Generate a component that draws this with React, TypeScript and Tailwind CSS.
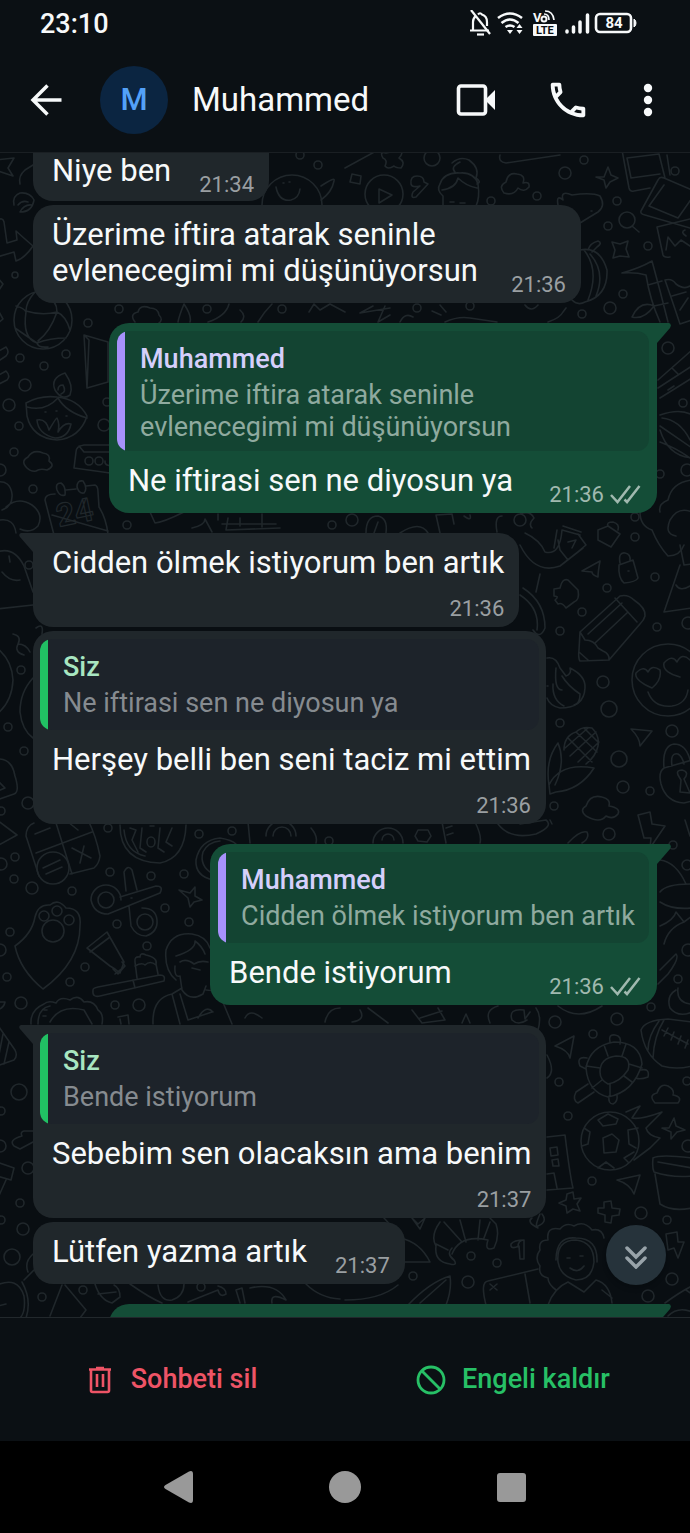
import type { ReactNode } from 'react';
import { MdOutlineCall } from 'react-icons/md';

interface Quote {
  author: string;
  text: string;
}

interface Message {
  text: string;
  time: string;
  mine?: boolean;
  tail?: boolean;
  // time sits on its own line under the text
  stacked?: boolean;
  // first row, its top is scrolled under the header
  scrolled?: boolean;
  quote?: Quote;
}

const messages: Message[] = [
  { text: 'Niye ben', time: '21:34', scrolled: true },
  { text: 'Üzerime iftira atarak seninle evlenecegimi mi düşünüyorsun', time: '21:36' },
  {
    text: 'Ne iftirasi sen ne diyosun ya',
    time: '21:36',
    mine: true,
    tail: true,
    quote: {
      author: 'Muhammed',
      text: 'Üzerime iftira atarak seninle evlenecegimi mi düşünüyorsun'
    }
  },
  { text: 'Cidden ölmek istiyorum ben artık', time: '21:36', tail: true, stacked: true },
  {
    text: 'Herşey belli ben seni taciz mi ettim',
    time: '21:36',
    stacked: true,
    quote: { author: 'Siz', text: 'Ne iftirasi sen ne diyosun ya' }
  },
  {
    text: 'Bende istiyorum',
    time: '21:36',
    mine: true,
    tail: true,
    quote: { author: 'Muhammed', text: 'Cidden ölmek istiyorum ben artık' }
  },
  {
    text: 'Sebebim sen olacaksın ama benim',
    time: '21:37',
    tail: true,
    stacked: true,
    quote: { author: 'Siz', text: 'Bende istiyorum' }
  },
  { text: 'Lütfen yazma artık', time: '21:37' }
];

// [cx, cy, r]
const dots: [number, number, number][] = [
  [15, 275, 3], [88, 323, 4], [119, 309, 4], [207, 309, 4], [282, 309, 4], [20, 358, 4], [66, 354, 4],
  [44, 366, 4], [25, 385, 6], [9, 405, 6], [19, 426, 4], [14, 452, 4], [33, 489, 4], [104, 425, 6],
  [107, 402, 4], [0, 470, 6], [127, 525, 4], [332, 525, 4], [300, 155, 4], [318, 165, 4],
  [432, 158, 8], [491, 201, 4], [537, 196, 4], [565, 173, 6], [584, 160, 4], [617, 201, 4],
  [608, 226, 4], [648, 246, 4], [675, 171, 4], [623, 294, 4], [610, 308, 6], [582, 314, 4],
  [417, 308, 4], [470, 306, 4], [668, 348, 6], [683, 403, 4], [660, 474, 4], [635, 537, 4],
  [687, 470, 6], [352, 520, 6], [635, 517, 4], [655, 577, 4], [607, 588, 4], [582, 612, 4],
  [560, 631, 4], [657, 627, 4], [688, 623, 6], [603, 682, 6], [609, 709, 8], [560, 723, 4],
  [672, 731, 6], [619, 759, 8], [623, 787, 6], [650, 791, 4], [554, 806, 4], [609, 834, 6],
  [29, 565, 4], [21, 670, 4], [8, 727, 4], [24, 751, 4], [28, 803, 6], [1, 811, 4],
  [15, 857, 4], [1, 864, 6], [14, 879, 4], [32, 888, 6], [72, 891, 4], [108, 828, 4],
  [110, 872, 4], [151, 876, 4], [184, 874, 4], [165, 908, 4], [189, 922, 4], [117, 924, 4],
  [199, 834, 4], [232, 831, 4], [329, 841, 4], [147, 946, 4], [85, 967, 4], [70, 982, 4],
  [21, 1003, 6], [7, 977, 4], [10, 932, 4], [0, 950, 6], [115, 1005, 4], [139, 1005, 6],
  [19, 1092, 8], [1, 1111, 4], [0, 1146, 6], [28, 1168, 6], [20, 1203, 4], [1, 1220, 4],
  [23, 1229, 6], [12, 1257, 8], [42, 1297, 4], [83, 1290, 4], [201, 1287, 4],
  [673, 845, 4], [687, 865, 5], [688, 950, 6], [678, 979, 4], [651, 1007, 4], [617, 1019, 6],
  [555, 1022, 6], [593, 1034, 4], [559, 1082, 4], [568, 1116, 4], [687, 1081, 4], [688, 1146, 6],
  [592, 1181, 4], [641, 1213, 6], [667, 1220, 4], [471, 1256, 4], [497, 1263, 4], [413, 1276, 4],
  [468, 1282, 6], [672, 1279, 6], [648, 1296, 6]
];

const doodles = [
  // planet, rocket and arrow
  'M-5 160 14 158 8 168 13 176-2 171', 'M20 184Q18 176 25 170L33 165', 'M14 205Q12 196 20 193Q30 192 34 200Q32 212 20 212Q24 204 32 205M18 205Q22 200 28 202',
  'M-3 220Q3 217 4 222L7 243 17 240 16 231Q26 240 33 246Q25 258 16 261L14 252-3 257', 'M-2 278 3 284-1 290M-2 310 3 319-3 324',
  'M-3 352 6 347Q10 352 6 356L-3 362M-3 376 6 371Q11 376 7 380L-3 385',
  'M262 205A30 30 0 1 1 322 205M321 186Q336 176 334 181Q332 192 321 200M276 187Q279 202 291 200Q299 198 300 189M283 183h1M289 182h1',
  // globe
  'M14 320a29 29 0 1 0 58 0a29 29 0 1 0-58 0M26 311Q42 316 57 312M16 306Q24 308 26 312Q22 338 37 343Q50 338 66 338M57 312Q50 332 38 341M35 292Q26 302 26 311M44 292Q57 300 57 312M57 312Q66 316 70 330M15 328Q28 337 37 343Q38 348 48 347',
  // clouds
  'M135 322Q129 314 138 312Q140 304 150 308Q158 308 159 315Q164 320 158 324', 'M27 468Q20 461 28 457Q33 449 43 453Q51 454 49 461Q56 466 47 470Q40 468 36 471Q31 472 27 468Z',
  'M504 193Q498 186 506 182Q508 172 517 174Q526 175 523 183Q530 181 529 187Q524 193 518 188Q514 196 504 193Z',
  'M586 816Q579 810 586 806Q590 794 602 797Q611 799 609 806Q621 808 618 814Q613 820 606 816Q600 824 586 816Z',
  'M655 1103Q648 1095 657 1093Q660 1083 668 1086Q675 1090 673 1095Q683 1097 678 1103Z',
  // candle, kite, tools between bubbles
  'M178 322Q179 316 184 304Q192 316 190 322M208 322Q226 316 229 304M240 310Q247 316 241 322M258 322Q264 312 272 304M309 312 314 304 320 310 330 304 345 312',
  'M84 335 108 342V382L87 388ZM84 335 89 340 87 388', 'M360 313 373 306M360 313 390 308M385 306 378 322 390 315',
  'M400 322Q405 312 413 317M432 311 441 315M440 305 446 312M445 322Q458 316 470 318L497 322M525 305Q531 313 538 305M548 322Q560 318 563 312L566 308',
  // diya lamp
  'M26 403Q40 395 57 397Q78 399 87 416Q80 438 57 440Q32 438 27 416Z', 'M27 407Q45 412 58 398Q66 412 87 418M55 390Q50 378 65 373Q74 386 70 395Q62 401 55 390ZM58 390Q58 385 63 385Q67 392 61 394',
  'M37 420Q46 418 49 430Q56 418 57 418Q60 424 58 432Q64 422 71 424Q68 438 55 438Q38 434 37 420ZM45 412h1M56 411h1M66 416h1',
  // music box and calendar
  'M110 445 84 445Q76 446 76 452L74 468 110 473M79 446 84 452H110', 'M85 461a4 4 0 1 0 8 0a4 4 0 1 0-8 0M95 461a4 4 0 1 0 8 0a4 4 0 1 0-8 0M105 461a4 4 0 1 0 6-3',
  'M54 535 45 500Q45 494 55 494M66 490 76 489M86 486 95 485Q98 486 98 492L99 507M52 515 108 531M99 507Q106 518 108 534M57 490Q55 483 61 483Q66 486 65 495Q60 497 57 490ZM77 487Q77 480 83 481Q88 488 84 493Q79 494 77 487Z',
  'M-3 482Q10 480 12 494Q13 506 2 510M6 507Q18 496 32 505Q44 514 38 526Q30 534 20 529M0 520Q14 518 16 533M150 512 155 523Q164 522 184 512M192 528Q205 525 205 519L212 532M218 520V514M228 518 226 530 280 528M240 518V526M262 514V527M222 524H276',
  // play, key, woman
  'M365 194a19 19 0 1 0 38 0a19 19 0 1 0-38 0M379 189V203L392 195Z', 'M383 158Q379 151 386 153L400 150Q404 153 399 158Q406 162 401 168Q396 168 394 166Q388 170 385 166Q388 160 383 158Z', 'M352 174 361 176 360 184 350 182Z',
  'M411 184Q410 176 417 176Q424 176 424 182L428 184 416 197Q410 199 413 192L420 186Q412 188 411 184Z',
  'M443 206V196Q436 190 440 184Q444 172 460 173Q474 172 478 184Q480 198 476 206M442 190Q456 188 458 178Q466 186 477 188M452 163Q460 156 469 160Q480 168 476 178Q482 182 477 184M455 172Q450 167 460 162M450 202h4M460 203h5',
  'M345 168 378 150M500 155Q498 162 506 163L560 155',
  // photos, whale, magnifier, landscape
  'M622 150 629 188Q630 192 634 191L650 188M627 158 659 154 665 178M627 158 631 178 660 174M667 155 670 175M658 180Q660 176 664 178L692 190M658 180 641 211Q640 214 645 215L690 228M664 185 649 206 678 218 692 198',
  'M558 205Q556 194 563 200Q560 190 572 195Q592 192 600 196Q606 206 598 212Q588 218 580 223M591 211h1', 'M619 220a8 8 0 1 0 16 0a8 8 0 1 0-16 0M632 226 639 232', 'M604 177 608 167 611 175 618 178 610 182 606 188 604 180 596 177ZM612 242 620 244 628 241 626 249 629 257 620 256 613 258 615 250Z',
  'M657 227 663 255Q664 258 670 257M657 227 690 219M666 250 668 237 675 246 681 240 690 246M685 230Q680 232 686 236',
  // pumpkin and bamboo
  'M580 250Q600 246 607 270Q608 296 585 302Q578 306 572 300M584 250Q600 270 588 300M590 254Q606 272 596 296M588 250Q590 243 598 241Q603 243 597 247L592 252',
  'M622 273Q640 268 652 261Q660 290 668 322M646 275Q636 272 622 273M648 285 662 281M654 306 668 303M646 275Q650 300 660 322M665 280Q672 278 676 284Q684 290 690 286M665 280Q672 300 680 324L692 320M632 317Q640 300 654 306Q644 320 632 317M672 296 686 292M688 298 680 310',
  // shuttlecock and volleyball
  'M658 380 692 350M658 388 692 366M660 398 692 378M672 368 678 374M668 390 674 386', 'M660 415Q680 408 692 415M660 430Q668 456 692 458M660 442Q676 448 690 458M662 418Q680 420 690 440M660 426 692 448',
  'M692 480Q672 482 668 500Q658 504 660 512M640 512Q640 526 652 530Q658 545 668 556Q680 556 684 545M692 512Q678 506 670 520Q664 534 676 536',
  'M366 533Q366 516 378 516Q388 518 386 533M378 522 374 533M400 533Q420 520 428 533M436 515 452 514 454 524M436 515 440 533M464 516Q472 522 470 515',
  // lock, arm, puzzle and pencil
  'M497 532Q494 516 502 516M514 520a6 6 0 1 0 12 0a6 6 0 1 0-12 0M520 514Q530 510 534 518Q528 524 532 528M525 533Q540 540 545 552Q560 556 562 530M520 545Q535 575 560 566L583 548M562 530 580 535M557 530 554 548M563 526 581 532M578 534 586 545 568 560 560 550 558 540M568 542 576 540 572 548',
  'M598 530 608 526 620 534 611 547 598 540ZM608 526Q606 522 613 522Q620 524 618 530', 'M619 565 633 560 638 578Q636 582 624 583Q618 578 619 565ZM620 563Q618 552 625 553Q631 554 630 561M628 571h1',
  'M582 571 600 561Q598 572 598 577Q592 575 592 572Z', 'M554 589 560 588Q562 578 568 580L578 590Q580 600 574 602L566 608Q562 602 558 604L555 600Q560 596 554 596Z',
  'M580 632 620 596Q628 594 634 600Q646 608 645 616Q644 620 640 624L609 660 580 661Q578 658 579 650ZM580 632 585 640Q594 640 598 648L603 651Q610 654 609 660M595 643 628 612M588 634 622 603M615 598 637 622M579 652 588 660',
  'M523 588Q545 602 545 628Q540 640 533 630M520 595Q540 608 537 630M540 574 536 592M680 545 684 565 692 564M680 565 664 612 692 608M676 585Q680 592 690 586',
  // flame, smiley, corn, cursor, padlock
  'M547 658Q556 656 560 668L566 676Q572 674 570 668Q586 676 585 688Q584 708 560 708Q550 706 547 698M556 668Q554 690 562 690M562 676Q568 686 580 694Q580 704 574 705M553 684Q552 700 564 706M547 686h1',
  'M632 680a36 36 0 1 0 72 0a36 36 0 1 0-72 0', 'M652 688Q634 680 636 673Q644 665 648 672Q652 664 660 670Q662 680 652 688ZM680 677Q662 672 664 663Q672 654 677 662Q682 652 690 660M648 692Q654 708 672 706Q686 704 688 690',
  'M549 785Q545 760 558 743Q566 762 555 785M549 785Q560 762 594 768Q580 790 556 792L550 794ZM564 750Q564 736 576 732Q582 726 592 728Q600 736 598 746Q596 756 586 764M568 738 592 762M576 732 597 752M584 728 598 742M565 748 588 728M570 756 596 732M578 762 599 742',
  'M631 729 652 731 640 746Q640 738 631 729Z', 'M664 768Q662 746 674 744Q686 744 690 760M672 766Q670 752 678 754Q682 756 684 764M692 760 664 768Q658 772 661 784Q666 802 684 803L692 801M678 775Q676 770 682 770Q690 772 684 779L690 793 680 792 681 780Z',
  // left edge
  'M-3 552Q14 546 24 566L33 592M-3 609 33 605M9 556 10 562M2 572Q10 582 20 580', 'M33 678Q20 692 20 712Q22 730 33 738M13 634Q22 636 18 644Q26 644 30 652M36 628Q44 622 42 634M18 644Q14 652 24 655',
  'M-3 648Q12 660 13 680Q12 702-3 714M-3 759Q12 758 15 776Q20 792 14 794L-3 800M-3 780 5 788-2 791',
  // calculator, watermelon, scissors
  'M-3 820 17 835-3 846', 'M26 836Q26 826 34 823M26 836 39 876M88 820Q96 836 100 856Q99 864 94 868L70 874M36 853 92 832M56 823 72 874M35 834 50 828M68 822 78 830M72 848 91 858M84 846 80 863',
  'M37 868a16 16 0 1 0 32 0a16 16 0 1 0-32 0M43 868 60 860M46 874 62 867', 'M120 825Q120 862 160 863Q185 858 186 825M124 830Q126 852 145 856M130 828 136 830 132 840 138 852M142 828 140 848 146 852M160 828 158 848 164 852M172 828 166 842 172 846M150 826h4M147 842a4 5 0 1 0 8 0a4 5 0 1 0-8 0',
  'M91 900a15 15 0 1 1 30 0M91 900Q94 914 108 914L160 893Q164 886 156 886L120 897M98 900a8 8 0 1 0 16 0a8 8 0 1 0-16 0M126 891 124 872Q128 864 132 870L137 890M129 906 131 926Q136 936 146 936Q158 932 157 920Q156 908 142 908M137 922a8 8 0 1 0 16 0a8 8 0 1 0-16 0M131 898h1',
  'M179 890 190 893 195 887 195 896 202 900 194 902 190 907 188 898Z',
  'M213 880Q195 876 196 860Q200 840 220 838Q232 840 236 844M213 874Q199 866 203 852Q208 842 220 841', 'M248 822 250 843M266 836a15 15 0 1 1 30 0M273 836a9 9 0 1 1 18 0M311 828Q318 836 316 843',
  // paw, tube, cake, woman
  'M15 946Q32 934 35 917Q38 904 50 905Q58 898 66 908Q82 908 80 926Q80 962 43 989Q20 970 15 946Z', 'M39 916a5 5 0 1 0 10 0a5 5 0 1 0-10 0M52 911a5 5 0 1 0 10 0a5 5 0 1 0-10 0M64 920a5 5 0 1 0 10 0a5 5 0 1 0-10 0M42 931a11 11 0 1 0 22 0a11 11 0 1 0-22 0',
  'M87 948 107 932 124 962 120 973 115 969 110 966ZM90 952 110 937M115 974 125 966M113 969 118 974 125 966 122 962',
  'M93 990Q93 988 98 987L160 975Q166 975 164 981L100 996Q92 998 93 990ZM133 980 135 988M137 978 135 962Q134 956 140 957Q140 952 146 955Q158 958 156 964L158 974M135 966Q142 962 145 965Q150 960 156 965',
  'M176 980Q164 970 166 950Q172 932 192 934Q206 936 210 948M176 956Q196 950 195 941Q202 946 205 954M175 966Q174 978 180 976L182 990Q190 1002 203 994L206 986M180 962Q186 958 194 964Q200 960 208 962M192 968 200 970M153 1024Q152 998 172 994L182 988M172 994 180 1024M180 994 188 1020 212 1012M206 990Q218 990 222 1000L232 1024M198 1018Q206 1004 213 1012',
  'M31 1024Q30 1010 44 1004Q48 1000 56 1003Q60 996 70 1000Q78 994 84 1002Q94 1000 98 1010Q104 1014 102 1024M38 1024Q38 1008 50 1006M50 1022Q60 1004 84 1010L92 1024M44 1010h3M43 1016h3M118 1017 128 1015 129 1024M120 1019 121 1024',
  'M-3 1002 5 1002Q4 1008-3 1010M-3 1024 15 1050Q18 1056 14 1060L-3 1066M3 1034-2 1060M9 1042 4 1064', 'M33 1131 24 1131Q20 1132 22 1136Q8 1140 14 1146L20 1149 33 1142M-3 1162 14 1168 11 1180-3 1176M6 1180-3 1200',
  // between the green and grey bubbles
  'M245 1018Q250 1008 262 1018M325 1022Q328 1008 340 1008M360 1010Q366 1020 352 1022M368 1008 388 1023M412 1010 422 1023 445 1020 438 1008M420 1018 442 1011M462 1023 466 1014 470 1023M490 1023Q484 1010 498 1006M524 1010 525 1019 530 1012M524 1010Q508 1008 512 1020Q518 1026 527 1020M536 1008Q542 1016 538 1030M558 1006Q578 1022 602 1006',
  'M373 843a15 15 0 1 1 30 0M382 840a6 6 0 1 1 12 0M418 830 428 830 431 836 427 842 418 841 415 836ZM442 822 446 843M446 828 452 826M447 835 453 833M475 822Q482 836 480 843M498 824Q510 840 536 834Q554 826 546 820L520 824M568 843Q580 830 587 832Q590 838 582 843M550 820 552 824',
  'M638 815 650 812 652 824 665 826 650 848 651 838 644 838ZM685 820 690 836',
  // hat, moon, football, turtle
  'M660 860Q676 862 686 884M660 892Q666 884 690 884M660 902Q672 910 692 908M660 926Q674 920 676 912M676 912 684 922 692 916M664 944Q668 928 684 922M660 970 676 954Q680 958 668 974L658 984M676 990Q666 996 670 1008Q678 1018 692 1012M678 988Q676 1002 690 1004',
  'M641 1030Q645 1020 668 1019L692 1022M641 1030Q644 1054 662 1066Q676 1070 692 1066M659 1021Q648 1036 648 1050M664 1020Q654 1036 653 1058M662 1030 688 1044M664 1036 668 1028M671 1040 674 1032M678 1044 681 1036M685 1048 688 1040',
  'M555 1046 574 1036 570 1058Q568 1050 555 1046Z', 'M586 1068Q590 1046 614 1042Q640 1042 642 1064Q634 1092 608 1097Q588 1092 586 1068ZM600 1072Q600 1058 616 1056Q632 1056 628 1070Q620 1082 608 1084Q600 1080 600 1072ZM608 1056 604 1045M622 1056 626 1044M629 1064 642 1068M624 1076 632 1082M610 1084 610 1096M602 1080 592 1088M600 1068 586 1066M610 1042Q608 1034 615 1035Q622 1036 620 1044M587 1058Q576 1056 580 1066L586 1069M641 1070Q650 1068 648 1077Q640 1080 636 1078M588 1084 576 1092Q572 1100 578 1103L594 1092M609 1096Q608 1104 613 1104Q618 1102 617 1095M547 1055Q556 1072 547 1078',
  // football on fire, building, pot, plus
  'M581 1141a29 29 0 1 0 58 0a29 29 0 1 0-58 0M603 1138 612 1134 619 1140 616 1152 604 1153ZM598 1120 608 1114 618 1119 616 1124 603 1126ZM638 1128 628 1130 629 1144 636 1148M584 1128 590 1132 588 1144 582 1146M598 1168 606 1162 614 1168M628 1162 624 1158 634 1152M626 1112 640 1106 632 1118Q640 1120 662 1112L646 1128Q648 1136 660 1138L650 1148 634 1160',
  'M547 1137 565 1135Q570 1176 573 1188L547 1190M550 1148 557 1147 558 1155 551 1156ZM552 1160 558 1159 559 1166 553 1166ZM547 1174 554 1173 557 1188', 'M669 1128 674 1118 676 1126 685 1130 677 1132 671 1139 671 1132 662 1128Z',
  'M653 1158Q660 1154 692 1158M653 1158Q652 1168 654 1172Q672 1178 692 1176M655 1174 660 1204Q672 1212 692 1208M658 1162 692 1168', 'M617 1180 640 1175 634 1194Q630 1184 617 1180Z',
  'M567 1194 573 1192 574 1199 581 1198 577 1204 580 1211 573 1209 567 1213 566 1206 559 1203 566 1200Z', 'M604 1202 611 1201 612 1208 620 1209 619 1215 612 1216 611 1223 605 1222 605 1215 598 1213 598 1208 604 1208Z',
  // bottom strip
  'M384 1218Q392 1226 400 1240M400 1238Q420 1242 430 1262H401M345 1300Q380 1300 398 1285M412 1218 418 1224 425 1218 420 1229ZM440 1222Q430 1236 436 1246Q434 1262 450 1264Q458 1266 454 1260Q446 1254 452 1248M444 1222 462 1242M436 1244 448 1250M460 1220 466 1242M480 1220 478 1240M490 1222 484 1238M452 1254Q460 1234 488 1240Q484 1252 494 1248Q500 1236 496 1224L490 1218',
  'M524 1240Q518 1240 518 1247M524 1240H524L524 1259 520 1259 519 1246Q510 1250 511 1244Q514 1240 524 1240M540 1214Q534 1228 538 1226Q548 1222 542 1214M532 1218Q526 1222 538 1228',
  'M408 1305Q430 1282 450 1276Q452 1290 446 1305M420 1303 446 1280M486 1305Q480 1282 488 1281L538 1269M525 1274 530 1303M490 1284 497 1290M497 1284 490 1290',
  'M556 1290Q548 1284 548 1278Q538 1276 540 1266Q534 1258 540 1250Q538 1240 548 1240Q546 1226 560 1229Q566 1222 574 1226Q584 1220 592 1230Q602 1228 604 1238M558 1262Q556 1240 576 1240Q594 1242 594 1262Q592 1280 576 1280Q560 1276 558 1262ZM556 1260Q556 1236 576 1238Q598 1238 597 1262M548 1305Q554 1288 568 1282L584 1292 596 1280Q610 1284 612 1303M570 1268Q578 1274 584 1266M567 1258h3M580 1256h3M602 1290 612 1298',
  'M666 1234 677 1232 678 1242 684 1242 678 1258 674 1248 668 1250ZM665 1303Q680 1292 692 1286M668 1316Q678 1306 692 1312M686 1290 692 1294',
  'M-3 1285Q18 1276 24 1296Q26 1312 20 1318M22 1282Q32 1300 26 1318M24 1280 34 1270M-2 1306 6 1304M33 1254Q24 1262 28 1272M62 1285 50 1316M65 1285 86 1310 80 1318M95 1284Q100 1300 112 1303M98 1294 116 1292M112 1303 120 1297Q120 1288 114 1285M130 1284Q150 1298 162 1303M158 1285Q160 1302 172 1300Q184 1296 184 1284M218 1286Q226 1288 226 1294Q220 1298 218 1290L188 1302M236 1290 240 1303M236 1290 242 1288 245 1303M250 1288Q276 1282 286 1300Q270 1292 272 1303M306 1284Q320 1298 340 1299'
];

function Wallpaper() {
  return (
    <svg
      aria-hidden="true"
      className="absolute inset-0 h-full w-full text-[#20272b]"
      viewBox="0 153 690 1165"
      preserveAspectRatio="xMidYMin slice"
      fill="none"
      stroke="currentColor"
      strokeWidth="1.6"
      strokeLinecap="round"
      strokeLinejoin="round"
    >
      {doodles.map((d, index) => (
        <path key={index} d={d} />
      ))}
      {dots.map(([cx, cy, r], index) => (
        <circle key={index} cx={cx} cy={cy} r={r} />
      ))}
      <text x="59" y="527" transform="rotate(-12 59 527)" fontSize="32" fontWeight="700" strokeWidth="1.2">
        24
      </text>
    </svg>
  );
}

function StatusBar() {
  return (
    <div className="flex h-12 items-center justify-between pl-10 pr-[53px]">
      <span className="text-[27px] font-medium leading-8">23:10</span>
      <svg width="169" height="28" viewBox="0 0 169 28" fill="none" stroke="currentColor" strokeWidth="2.2" aria-label="Durum">
        {/* muted bell */}
        <path d="M2 20.500H21M5 20V12Q5 8 8 6M10 4.500Q12 2 14 4.500Q19 6 19 12V16" />
        <path d="M3 0 22 24" />
        <path d="M9 24.500H16" />
        {/* wifi */}
        <path d="M30 8Q42 -1 54 8M33.500 13Q42 6 50.500 13M37.500 17Q42 14 46.500 17" strokeWidth="2.6" />
        <path d="M39 20H45L42 24ZM48.500 18 51.500 14 54.500 18ZM48.500 20H54.500L51.500 24Z" fill="currentColor" stroke="none" />
        {/* VoLTE */}
        <rect x="65" y="14" width="24" height="12" rx="1" fill="currentColor" stroke="none" />
        <text x="68" y="24" fontSize="11" fontWeight="700" fill="#0b1014" stroke="none">LTE</text>
        <text x="65" y="12" fontSize="13" fontWeight="700" fill="currentColor" stroke="none">V</text>
        <circle cx="76" cy="9" r="2.500" strokeWidth="2" />
        <path d="M76 4Q81 4 81 10M77 1Q85 1 86 10" strokeWidth="1.700" />
        {/* signal */}
        <path d="M99 21V22M105.500 17V22M112 12V22M119.500 5V22" strokeWidth="3.500" strokeLinecap="round" />
        {/* battery */}
        <rect x="128" y="4" width="35" height="18" rx="4" strokeWidth="2.600" />
        <path d="M166 9Q168 10 168 13Q168 16 166 17Z" fill="currentColor" strokeWidth="1" />
        <text x="146" y="18" fontSize="15" fontWeight="700" textAnchor="middle" fill="currentColor" stroke="none">84</text>
      </svg>
    </div>
  );
}

function Header() {
  return (
    <header className="flex h-[105px] items-center border-b border-[#1a1f23] pl-6 pr-[18px]">
      <button aria-label="Geri" className="flex h-12 w-12 items-center">
        <svg width="44" height="44" viewBox="0 0 44 44" fill="none" stroke="currentColor" strokeWidth="3.500">
          <path d="M37.500 22H9M23.500 7.500 9 22 23.500 36.500" />
        </svg>
      </button>
      <div className="ml-7 flex h-[68px] w-[68px] items-center justify-center rounded-full bg-[#0b2541] text-[31px] font-medium text-[#53a1f8]">
        M
      </div>
      <h1 className="ml-6 flex-1 text-[33px] leading-10">Muhammed</h1>
      <button aria-label="Görüntülü arama" className="flex h-12 w-12 items-center justify-center">
        <svg width="44" height="44" viewBox="0 0 44 44">
          <rect x="4.500" y="8" width="27" height="28" rx="2.500" fill="none" stroke="currentColor" strokeWidth="3.600" />
          <path d="M31 22 41 12V32Z" fill="currentColor" />
        </svg>
      </button>
      <button aria-label="Sesli arama" className="ml-11 flex h-12 w-12 items-center justify-center">
        <MdOutlineCall className="h-[46px] w-[46px]" />
      </button>
      <button aria-label="Diğer seçenekler" className="ml-8 flex h-12 w-12 items-center justify-center">
        <svg width="12" height="36" viewBox="0 0 12 36" fill="currentColor">
          <circle cx="6" cy="6" r="4.200" />
          <circle cx="6" cy="18" r="4.200" />
          <circle cx="6" cy="30" r="4.200" />
        </svg>
      </button>
    </header>
  );
}

function Tail({ mine }: { mine?: boolean }) {
  return mine ? (
    <svg className="absolute left-full top-0 text-[#144d37]" width="14" height="20" viewBox="0 0 14 20" fill="currentColor">
      <path d="M0 0H12Q15 1 13 5L0 20Z" />
    </svg>
  ) : (
    <svg className="absolute right-full top-0 text-[#20272b]" width="14" height="20" viewBox="0 0 14 20" fill="currentColor">
      <path d="M14 0H2Q-1 1 1 4L14 19Z" />
    </svg>
  );
}

function Checks() {
  return (
    <svg width="32" height="24" viewBox="0 0 32 24" fill="none" stroke="currentColor" strokeWidth="2.500" aria-label="İletildi">
      <path d="M1 12 7.500 19 20 3M14.500 16.500 17 19 29.500 3" />
    </svg>
  );
}

function QuoteBox({ quote, mine }: { quote: Quote; mine?: boolean }) {
  return (
    <div
      className={`mt-2 flex min-h-[91px] overflow-hidden rounded-xl ${mine ? 'mx-2 bg-[#134432]' : 'mx-[7px] bg-[#1d232a]'}`}
    >
      <div className={`w-2 shrink-0 ${mine ? 'bg-[#a791fb]' : 'bg-[#21c063]'}`} />
      <div className="py-2 pl-[15px] pr-3.5 text-[27px]">
        <p className={`font-medium leading-10 ${mine ? 'text-[#d5cffb]' : 'text-[#a8e6c1]'}`}>{quote.author}</p>
        <p className={`leading-8 ${mine ? 'text-[#8faa9f]' : 'text-[#868b90]'}`}>{quote.text}</p>
      </div>
    </div>
  );
}

function Bubble({ message }: { message: Message }) {
  const { text, time, mine, tail, stacked, scrolled, quote } = message;
  const corner = tail ? (mine ? 'rounded-tr-none' : 'rounded-tl-none') : scrolled ? 'rounded-t-none' : '';

  return (
    <li
      className={`relative max-w-[548px] rounded-[20px] ${corner} ${tail ? 'mt-5' : 'mt-1 first:mt-0'} ${
        mine ? 'self-end bg-[#144d37]' : 'self-start bg-[#20272b]'
      }`}
    >
      {tail && <Tail mine={mine} />}
      {quote && <QuoteBox quote={quote} mine={mine} />}
      <div
        className={`flex justify-between pl-[19px] pr-[15px] ${scrolled ? '-mb-0.5' : 'pt-3'} ${
          stacked ? 'flex-col' : 'gap-7'
        }`}
      >
        <p className={`text-[31px] leading-9 ${stacked ? 'pb-4' : 'pb-3.5'}`}>{text}</p>
        <div
          className={`flex shrink-0 items-center gap-1.5 self-end pb-1.5 text-[22px] leading-6 ${
            mine ? 'text-[#a0b9af]' : 'text-[#9a9fa2]'
          }`}
        >
          <time>{time}</time>
          {mine && <Checks />}
        </div>
      </div>
    </li>
  );
}

function FooterAction({ icon, label, color }: { icon: ReactNode; label: string; color: string }) {
  return (
    <button className={`flex flex-1 items-center justify-center gap-4 text-[27px] font-medium ${color}`}>
      {icon}
      {label}
    </button>
  );
}

export default function App() {
  return (
    <div className="flex h-screen flex-col bg-[#0b1014] font-['Roboto',sans-serif] text-[#f7f9fa]">
      <StatusBar />
      <Header />

      {/* Conversation */}
      <main className="relative min-h-0 flex-1 overflow-hidden bg-[#090e12]">
        <Wallpaper />
        <ul className="relative flex flex-col px-[33px]">
          {messages.map((message, index) => (
            <Bubble key={index} message={message} />
          ))}
          {/* next message, still below the fold */}
          <li className="relative mt-5 h-16 w-full max-w-[548px] self-end rounded-[20px] rounded-tr-none bg-[#144d37]">
            <Tail mine />
          </li>
        </ul>
        <button
          aria-label="En alta git"
          className="absolute bottom-8 right-6 flex h-[60px] w-[60px] items-center justify-center rounded-full bg-[#26333b] text-[#98a3a9] shadow-md"
        >
          <svg width="28" height="28" viewBox="0 0 28 28" fill="none" stroke="currentColor" strokeWidth="3.500" strokeLinecap="round">
            <path d="M5 7 14 16 23 7M5 17 14 26 23 17" />
          </svg>
        </button>
      </main>

      {/* Blocked contact actions */}
      <footer className="flex h-[124px] shrink-0 border-t border-[#22282c] pr-1.5">
        <FooterAction
          label="Sohbeti sil"
          color="text-[#ee5466]"
          icon={
            <svg width="30" height="30" viewBox="-2 0 30 30" fill="none" stroke="currentColor" strokeWidth="2.600">
              <path d="M2 4.500H24M9 3H17M4 5V25.500Q4 27 5.500 27H20.500Q22 27 22 25.500V5" />
              <path d="M10 9V22M16 9V22" />
            </svg>
          }
        />
        <FooterAction
          label="Engeli kaldır"
          color="text-[#27c066]"
          icon={
            <svg width="30" height="30" viewBox="0 0 30 30" fill="none" stroke="currentColor" strokeWidth="2.800">
              <circle cx="15" cy="15" r="13" />
              <path d="M6 6 24 24" />
            </svg>
          }
        />
      </footer>

      {/* System navigation */}
      <nav className="flex h-[92px] shrink-0 items-center justify-center gap-[134px] bg-black text-[#999999]">
        <button aria-label="Geri">
          <svg width="32" height="32" viewBox="0 0 32 32" fill="currentColor">
            <path d="M2.500 14 26 .5Q30-1 30 3V29Q30 33 26 31.500L2.500 18Q-.5 16 2.500 14Z" />
          </svg>
        </button>
        <button aria-label="Ana ekran" className="h-8 w-8 rounded-full bg-[#999999]" />
        <button aria-label="Son uygulamalar" className="flex h-8 w-8 items-center justify-center">
          <span className="h-[29px] w-[29px] rounded-[3px] bg-[#999999]" />
        </button>
      </nav>
    </div>
  );
}
